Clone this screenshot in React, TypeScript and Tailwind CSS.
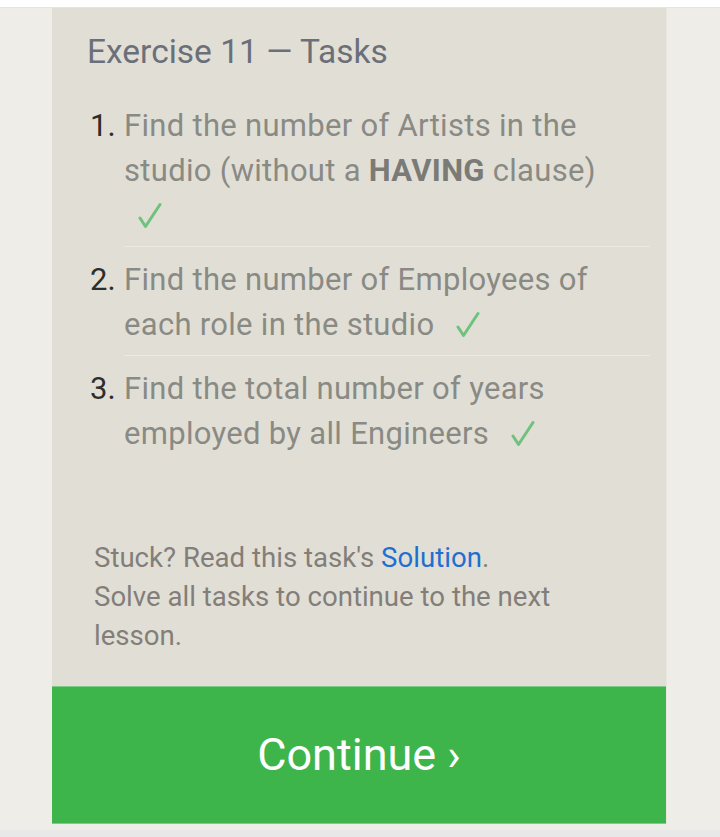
import React from 'react';

const tasks: { parts: React.ReactNode }[] = [
  { parts: <>Find the number of Artists in the studio (without a <b className="font-bold text-[#7a7a76]">HAVING</b> clause)</> },
  { parts: <>Find the number of Employees of each role in the studio</> },
  { parts: <>Find the total number of years employed by all Engineers</> },
];

function Check() {
  return (
    <svg viewBox="0 0 26 27" className="inline-block ml-[12px] w-[26px] h-[27px] align-[-3px]">
      <path d="M4 16 L9.5 24.5 L24 2.5" fill="none" stroke="#6fc27c" strokeWidth="3" strokeLinecap="round" strokeLinejoin="round" />
    </svg>
  );
}

export default function App() {
  return (
    <div className="min-h-[837px] flex flex-col bg-[#efede7] font-['Roboto','Liberation_Sans',sans-serif]">
      <div className="h-[8px] bg-white border-b border-[#e4e4e4]" />
      <div className="flex">
        <div className="ml-[52px] w-[615px] bg-[#e1dfd5] border-r border-[#e9e7df] flex flex-col">
          <h1 className="pt-[24px] pl-[35px] text-[33.5px] leading-[40px] text-[#6b6f79]">
            Exercise 11 — Tasks
          </h1>

          <ol className="mt-[23px] pl-[38px] pr-[16px]">
            {tasks.map((t, i) => (
              <li key={i} className="flex text-[31px] leading-[45px] tracking-[0.3px]">
                <span className={`w-[34px] shrink-0 text-[#2e2e2e] tracking-normal ${i > 0 ? 'pt-[11px]' : 'pt-[8px]'}`}>{i + 1}.</span>
                <div className={`flex-1 pb-[8px] pr-[16px] text-[#8a8a85] ${i > 0 ? 'pt-[10px] border-t border-[#ebe9e1]' : 'pt-[8px]'}`}>
                  {t.parts}{' '}
                  <Check />
                </div>
              </li>
            ))}
          </ol>

          <div className="mt-[74px] pl-[42px] pr-[40px] text-[27.6px] leading-[39px] text-[#837e7a]">
            <p>
              Stuck? Read this task's <a className="text-[#1f6fd2]">Solution</a>.
            </p>
            <p>Solve all tasks to continue to the next lesson.</p>
          </div>

          <button className="mt-[31px] h-[138px] w-full bg-[#3db54b] border-y border-[#7ccc86] text-white text-[45px] flex items-center justify-center">
            Continue ›
          </button>
        </div>
      </div>
      <div className="h-[6px]" />
      <div className="flex-1 bg-[#e8e8e9]" />
    </div>
  );
}
